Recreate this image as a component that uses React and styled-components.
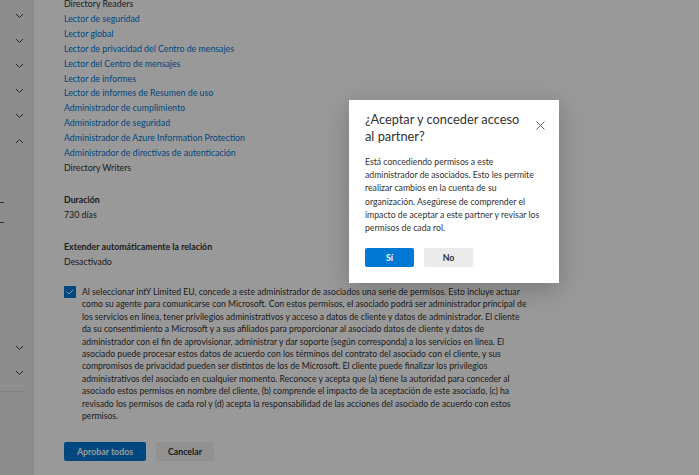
import React from 'react';
import styled, { createGlobalStyle } from 'styled-components';

const Global = createGlobalStyle`
  html, body { margin:0; padding:0; height:100%; overflow:hidden; }
  body { font-family: Lato, "Noto Sans", sans-serif; color:#323130; background:#fff; }
  #root { height:100%; }
`

const Page = styled.div`
  height:475px;
  display:flex;
  overflow:hidden;
  position:relative;
`

const Side = styled.div`
  width:34px;
  flex:none;
  background:#ebebeb;
  border-right:1px solid #e0e0e0;
  display:flex;
  flex-direction:column;
  padding-top:3px;
  box-sizing:border-box;
`

const ChevRow = styled.div`
  height:25px;
  display:flex;
  align-items:center;
  justify-content:center;
  padding-left:6px;
`

const SideGap = styled.div`
  height:${p => p.h}px;
`

const Dash = styled.div`
  width:4px;
  height:1px;
  background:#555;
  margin-top:${p => p.top}px;
`

const SideRule = styled.div`
  width:24px;
  height:1px;
  background:#d6d6d6;
  margin-top:6px;
`

const Main = styled.div`
  flex:1;
  padding:0 0 0 30px;
  font-size:8.8px;
`

const List = styled.div`
  display:flex;
  flex-direction:column;
  line-height:14.9px;
  margin-top:-3px;
`

const Item = styled.div`
  color:${p => (p.link ? '#0078d4' : '#323130')};
  white-space:nowrap;
`

const Field = styled.div`
  margin-top:${p => p.top}px;
  line-height:15px;
`

const Label = styled.div`
  font-weight:700;
`

const Consent = styled.div`
  display:flex;
  gap:6px;
  margin-top:17px;
`

const Box = styled.div`
  width:12px;
  height:12px;
  flex:none;
  background:#0078d4;
  border-radius:1px;
  display:flex;
  align-items:center;
  justify-content:center;
  margin-top:0;
`

const Para = styled.div`
  font-size:8.65px;
  line-height:12.4px;
  white-space:nowrap;
`

const Line = styled.div``

const Actions = styled.div`
  display:flex;
  gap:10px;
  margin-top:20px;
`

const Btn = styled.button`
  width:${p => p.w}px;
  height:19px;
  padding:0;
  border:none;
  border-radius:2px;
  font-family:inherit;
  font-size:8.8px;
  font-weight:700;
  background:${p => (p.primary ? '#0078d4' : '#f3f2f1')};
  color:${p => (p.primary ? '#fff' : '#323130')};
`

const Overlay = styled.div`
  position:absolute;
  inset:0;
  background:rgba(0,0,0,0.4);
`

const Dialog = styled.div`
  position:absolute;
  left:349px;
  top:100px;
  width:210px;
  height:183px;
  background:#fff;
  box-shadow:0 6px 24px rgba(0,0,0,0.22);
  box-sizing:border-box;
  padding:11px 16px 0 16px;
`

const TitleRow = styled.div`
  display:flex;
  justify-content:space-between;
  align-items:flex-start;
`

const Title = styled.h2`
  margin:0;
  font-size:12.8px;
  font-weight:400;
  line-height:17px;
  color:#323130;
  white-space:nowrap;
`

const Close = styled.div`
  margin-top:3px;
  margin-right:-2px;
`

const Body = styled.div`
  margin-top:10px;
  font-size:8.7px;
  line-height:13.2px;
  color:#323130;
  white-space:nowrap;
`

const DlgActions = styled.div`
  display:flex;
  gap:10px;
  margin-top:14px;
`

const DlgBtn = styled.button`
  width:49px;
  height:19px;
  padding:0;
  border:none;
  border-radius:2px;
  font-family:inherit;
  font-size:8.8px;
  font-weight:700;
  background:${p => (p.primary ? '#0078d4' : '#ebebeb')};
  color:${p => (p.primary ? '#fff' : '#323130')};
`

const Chevron = ({ up }) => (
  <svg width="9" height="6" viewBox="0 0 9 6">
    <path d={up ? 'M1 5 L4.5 1.5 L8 5' : 'M1 1 L4.5 4.5 L8 1'} fill="none" stroke="#444" strokeWidth="1" />
  </svg>
)

const roles = [
  ['Directory Readers', false],
  ['Lector de seguridad', true],
  ['Lector global', true],
  ['Lector de privacidad del Centro de mensajes', true],
  ['Lector del Centro de mensajes', true],
  ['Lector de informes', true],
  ['Lector de informes de Resumen de uso', true],
  ['Administrador de cumplimiento', true],
  ['Administrador de seguridad', true],
  ['Administrador de Azure Information Protection', true],
  ['Administrador de directivas de autenticación', true],
  ['Directory Writers', false],
]

const consent = [
  'Al seleccionar intY Limited EU, concede a este administrador de asociados una serie de permisos. Esto incluye actuar',
  'como su agente para comunicarse con Microsoft. Con estos permisos, el asociado podrá ser administrador principal de',
  'los servicios en línea, tener privilegios administrativos y acceso a datos de cliente y datos de administrador. El cliente',
  'da su consentimiento a Microsoft y a sus afiliados para proporcionar al asociado datos de cliente y datos de',
  'administrador con el fin de aprovisionar, administrar y dar soporte (según corresponda) a los servicios en línea. El',
  'asociado puede procesar estos datos de acuerdo con los términos del contrato del asociado con el cliente, y sus',
  'compromisos de privacidad pueden ser distintos de los de Microsoft. El cliente puede finalizar los privilegios',
  'administrativos del asociado en cualquier momento. Reconoce y acepta que (a) tiene la autoridad para conceder al',
  'asociado estos permisos en nombre del cliente, (b) comprende el impacto de la aceptación de este asociado, (c) ha',
  'revisado los permisos de cada rol y (d) acepta la responsabilidad de las acciones del asociado de acuerdo con estos',
  'permisos.',
]

const dialogText = [
  'Está concediendo permisos a este',
  'administrador de asociados. Esto les permite',
  'realizar cambios en la cuenta de su',
  'organización. Asegúrese de comprender el',
  'impacto de aceptar a este partner y revisar los',
  'permisos de cada rol.',
]

export default function App() {
  return (
    <Page>
      <Global />
      <Side>
        <ChevRow><Chevron /></ChevRow>
        <ChevRow><Chevron /></ChevRow>
        <ChevRow><Chevron /></ChevRow>
        <ChevRow><Chevron /></ChevRow>
        <ChevRow><Chevron /></ChevRow>
        <ChevRow><Chevron up /></ChevRow>
        <SideGap h={182}>
          <Dash top={49} />
          <Dash top={19} />
        </SideGap>
        <ChevRow><Chevron /></ChevRow>
        <ChevRow><Chevron /></ChevRow>
        <SideRule />
      </Side>
      <Main>
        <List>
          {roles.map(([name, link]) => (
            <Item key={name} link={link}>{name}</Item>
          ))}
        </List>
        <Field top={16}>
          <Label>Duración</Label>
          <div>730 días</div>
        </Field>
        <Field top={17}>
          <Label>Extender automáticamente la relación</Label>
          <div>Desactivado</div>
        </Field>
        <Consent>
          <Box>
            <svg width="8" height="6" viewBox="0 0 8 6">
              <path d="M0.8 3 L3 5 L7.2 0.8" fill="none" stroke="#fff" strokeWidth="1" />
            </svg>
          </Box>
          <Para>
            {consent.map(l => <Line key={l}>{l}</Line>)}
          </Para>
        </Consent>
        <Actions>
          <Btn primary w={82}>Aprobar todos</Btn>
          <Btn w={58}>Cancelar</Btn>
        </Actions>
      </Main>
      <Overlay />
      <Dialog>
        <TitleRow>
          <Title>¿Aceptar y conceder acceso<br />al partner?</Title>
          <Close>
            <svg width="9" height="9" viewBox="0 0 9 9">
              <path d="M0.5 0.5 L8.5 8.5 M8.5 0.5 L0.5 8.5" stroke="#605e5c" strokeWidth="1" />
            </svg>
          </Close>
        </TitleRow>
        <Body>
          {dialogText.map(l => <Line key={l}>{l}</Line>)}
        </Body>
        <DlgActions>
          <DlgBtn primary>Sí</DlgBtn>
          <DlgBtn>No</DlgBtn>
        </DlgActions>
      </Dialog>
    </Page>
  );
}
